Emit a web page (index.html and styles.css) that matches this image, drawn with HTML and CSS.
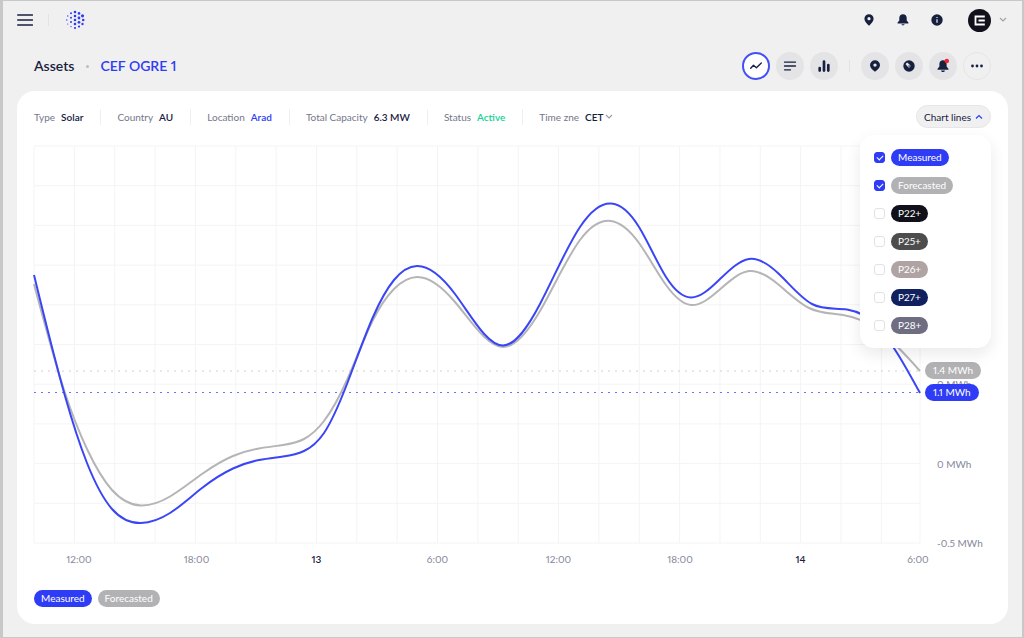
FILE: index.html
```html
<!DOCTYPE html>
<html lang="en">
<head>
<meta charset="utf-8">
<title>CEF OGRE 1</title>
<link rel="stylesheet" href="styles.css">
</head>
<body>
<header class="topbar">
  <button class="icon-btn" aria-label="Menu"><svg width="16" height="14" viewBox="0 0 16 14"><path d="M.8 2h14.6M.8 7h14.6M.8 12h14.6" stroke="#17203f" stroke-width="1.6" stroke-linecap="round"/></svg></button>
  <span class="rule rule-top"></span>
  <a class="logo" href="#" aria-label="Home"><svg width="20" height="20" viewBox="0 0 20 20" fill="#2f3cf5"><circle cx="10" cy="2" r="1.300"/><circle cx="10" cy="6" r="1.300"/><circle cx="10" cy="10" r="1.300"/><circle cx="10" cy="14" r="1.300"/><circle cx="10" cy="18" r="1.100"/><circle cx="6" cy="3.200" r="1"/><circle cx="6" cy="7.700" r="1"/><circle cx="6" cy="12" r="1"/><circle cx="6" cy="16.600" r=".7"/><circle cx="14" cy="3.400" r="1.300"/><circle cx="14" cy="8" r="1.400"/><circle cx="14" cy="12.300" r="1.400"/><circle cx="14" cy="16.600" r="1.100"/><circle cx="17.500" cy="5.800" r="1.600"/><circle cx="18.200" cy="10" r="1.300"/><circle cx="17.500" cy="14" r="1.200"/><circle cx="2.800" cy="6" r=".7"/><circle cx="1.800" cy="10" r=".7"/><circle cx="2.800" cy="14" r=".6"/></svg></a>
  <nav class="top-actions">
    <button class="icon-btn" aria-label="Locations"><svg width="14" height="14" viewBox="0 0 14 14"><path fill="#17203f" fill-rule="evenodd" d="M7 1.200a4.600 4.600 0 0 0-4.600 4.600C2.400 8.600 5 10.800 7 12.800c2-2 4.600-4.200 4.600-7A4.600 4.600 0 0 0 7 1.200zm0 2.900a1.600 1.600 0 1 1 0 3.200 1.600 1.600 0 0 1 0-3.200z"/></svg></button>
    <button class="icon-btn" aria-label="Notifications"><svg width="14" height="14" viewBox="0 0 14 14" fill="#17203f"><path d="M7 1.200c-2.300 0-3.700 1.700-3.700 3.800v2.400L1.600 9.500c-.3.500 0 1 .5 1h9.800c.5 0 .8-.5.5-1l-1.700-2.100V5c0-2.100-1.400-3.800-3.700-3.800zM5.400 11.300h3.200c-.3 1.500-2.900 1.500-3.200 0z"/></svg></button>
    <button class="icon-btn" aria-label="Information"><svg width="14" height="14" viewBox="0 0 14 14"><circle cx="7" cy="7" r="5.700" fill="#17203f"/><path d="M7 6.200v3.600M7 3.900v1.200" stroke="#dfe2ec" stroke-width="1.300"/></svg></button>
  </nav>
  <button class="account" aria-label="Account"><svg width="23" height="23" viewBox="0 0 23 23"><circle cx="11.500" cy="11.500" r="11.500" fill="#11111b"/><path d="M16.800 7.500H7.500v8h9.300M10.500 11.500h6.300" fill="none" stroke="#fff" stroke-width="1.800"/></svg><svg width="8" height="6" viewBox="0 0 8 6"><path d="M1 1l3 3 3-3" fill="none" stroke="#a3a3a7" stroke-width="1.200"/></svg></button>
</header>

<div class="titlebar">
  <h1 class="crumbs"><a class="crumb" href="#">Assets</a><span class="crumb-dot"></span><span class="crumb-current">CEF OGRE 1</span></h1>
  <div class="tools">
    <button class="round round-active" aria-label="Line chart"><svg width="14" height="14" viewBox="0 0 14 14"><path d="M1.700 9.200l2.800-2.900 2.900 2.400 4.900-4.600" fill="none" stroke="#17203f" stroke-width="1.400" stroke-linecap="round" stroke-linejoin="round"/></svg></button>
    <button class="round" aria-label="List"><svg width="14" height="14" viewBox="0 0 14 14"><path d="M1.500 3.200h11M1.500 7h11M1.500 10.800h6" stroke="#17203f" stroke-width="1.300" stroke-linecap="round"/></svg></button>
    <button class="round" aria-label="Bar chart"><svg width="14" height="14" viewBox="0 0 14 14"><path d="M2.700 9v2.600M7 2.500v9.100M11.300 6v5.600" stroke="#17203f" stroke-width="2.700" stroke-linecap="round"/></svg></button>
    <span class="rule rule-tools"></span>
    <button class="round" aria-label="Location"><svg width="14" height="14" viewBox="0 0 14 14"><path fill="#17203f" fill-rule="evenodd" d="M7 1.200a5 5 0 0 0-5 5c0 2.600 2.500 4.500 5 6.600 2.500-2.100 5-4 5-6.600a5 5 0 0 0-5-5zm0 3.200a1.700 1.700 0 1 1 0 3.400 1.700 1.700 0 0 1 0-3.400z"/></svg></button>
    <button class="round" aria-label="Performance"><svg width="14" height="14" viewBox="0 0 14 14"><circle cx="7" cy="7" r="5.700" fill="#17203f"/><path d="M3.600 5.200a3 3 0 0 1 1.600-1.600L8 6a1.200 1.200 0 1 1-2 2z" fill="#e5e5e8"/><circle cx="7.100" cy="7.100" r=".8" fill="#17203f"/></svg></button>
    <button class="round" aria-label="Alerts"><svg width="16" height="16" viewBox="0 0 16 16"><path d="M8 2.200c-2.200 0-3.600 1.700-3.600 3.800v2.600l-1.800 2.200c-.4.500 0 1 .5 1h9.800c.6 0 .8-.5.500-1l-1.800-2.200V6c0-2.100-1.400-3.800-3.600-3.800zM6 12.500h4c-.5 2-3.500 2-4 0z" fill="#17203f"/><circle cx="11.800" cy="3" r="2.300" fill="#f5222d"/></svg></button>
    <button class="round round-ghost" aria-label="More"><svg width="14" height="14" viewBox="0 0 14 14" fill="#17203f"><circle cx="2.500" cy="7" r="1.400"/><circle cx="7" cy="7" r="1.400"/><circle cx="11.500" cy="7" r="1.400"/></svg></button>
  </div>
</div>

<main class="card">
  <div class="meta-row">
    <dl class="meta">
      <div class="meta-item"><dt>Type</dt><dd>Solar</dd></div>
      <div class="meta-item"><dt>Country</dt><dd>AU</dd></div>
      <div class="meta-item"><dt>Location</dt><dd><a class="meta-link" href="#">Arad</a></dd></div>
      <div class="meta-item"><dt>Total Capacity</dt><dd>6.3 MW</dd></div>
      <div class="meta-item"><dt>Status</dt><dd class="meta-ok">Active</dd></div>
      <div class="meta-item"><dt>Time zne</dt><dd><button class="zone">CET<svg width="8" height="6" viewBox="0 0 8 6"><path d="M1 1l3 3 3-3" fill="none" stroke="#9b9ba6" stroke-width="1.100"/></svg></button></dd></div>
    </dl>
    <div class="lines">
      <button class="lines-btn" aria-expanded="true">Chart lines<svg width="8" height="6" viewBox="0 0 8 6"><path d="M1 4.500l3-3 3 3" fill="none" stroke="#2f3cf5" stroke-width="1.200"/></svg></button>
      <div class="lines-menu">
        <label class="option"><input class="tick" type="checkbox" checked><span class="pill measured">Measured</span></label>
        <label class="option"><input class="tick" type="checkbox" checked><span class="pill forecasted">Forecasted</span></label>
        <label class="option"><input class="tick" type="checkbox"><span class="pill p22">P22+</span></label>
        <label class="option"><input class="tick" type="checkbox"><span class="pill p25">P25+</span></label>
        <label class="option"><input class="tick" type="checkbox"><span class="pill p26">P26+</span></label>
        <label class="option"><input class="tick" type="checkbox"><span class="pill p27">P27+</span></label>
        <label class="option"><input class="tick" type="checkbox"><span class="pill p28">P28+</span></label>
      </div>
    </div>
  </div>

  <div class="chart">
    <svg class="plot" viewBox="0 0 886 397" preserveAspectRatio="none" role="img" aria-label="Energy, measured and forecasted">
      <g id="grid" class="grid"></g>
      <path class="level level-forecasted" d="M0 225H886"/>
      <path class="level level-measured" d="M0 246.500H886"/>
      <path id="forecasted" class="line line-forecasted"/>
      <path id="measured" class="line line-measured"/>
    </svg>
    <div class="y-axis">
      <div class="y-labels"><span>0 MWh</span><span>0 MWh</span><span>-0.5 MWh</span></div>
      <span class="pill value value-forecasted forecasted">1.4 MWh</span>
      <span class="pill value value-measured measured">1.1 MWh</span>
    </div>
  </div>
  <div class="x-labels"><span>12:00</span><span>18:00</span><b>13</b><span>6:00</span><span>12:00</span><span>18:00</span><b>14</b><span>6:00</span></div>
  <div class="legend"><span class="pill measured">Measured</span><span class="pill forecasted">Forecasted</span></div>
</main>
<script src="chart.js"></script>
</body>
</html>
```
FILE: styles.css
```css
* { box-sizing: border-box; }
body {
  margin: 0;
  min-height: 100vh;
  background: #f0f0f0;
  border: solid #c8c8c8;
  border-width: 1px 2px 1px 3px;
  font: 10px/16px Lato, "Liberation Sans", sans-serif;
  font-variant-numeric: proportional-nums;
  color: #17203f;
}
button { font: inherit; font-variant-numeric: inherit; color: inherit; padding: 0; border: 0; background: none; cursor: pointer; }
a { color: inherit; text-decoration: none; }
svg { display: block; flex: none; }

.topbar { display: flex; align-items: center; height: 38px; padding: 0 15px 0 14px; }
.icon-btn { display: flex; }
.rule { width: 1px; background: #e3e3e5; }
.rule-top { height: 12px; margin: 0 16px 0 15px; }
.logo { display: flex; }
.top-actions { display: flex; gap: 20px; margin-left: auto; }
.account { display: flex; align-items: center; gap: 8px; margin-left: 24px; }

.titlebar { display: flex; align-items: center; justify-content: space-between; padding: 13px 31px 11px; }
.crumbs { display: flex; align-items: center; margin: 0; font-size: 14px; line-height: 18px; font-weight: 600; }
.crumb-dot { width: 3px; height: 3px; margin: 0 11px 0 12px; border-radius: 50%; background: #bcbcc4; }
.crumb-current { color: #2f3cf5; }
.tools { display: flex; align-items: center; gap: 6px; }
.round { display: flex; align-items: center; justify-content: center; width: 28px; height: 28px; border-radius: 50%; background: #e4e4e7; }
.round-active { background: #fff; border: 2px solid #4450f5; }
.round-ghost { background: none; border: 1px solid #e6e6e8; }
.rule-tools { height: 12px; margin: 0 5px; }

.card { margin: 0 14px; padding: 14px 17px 17px; border-radius: 18px; background: #fff; }
.meta-row { display: flex; align-items: center; justify-content: space-between; }
.meta { display: flex; margin: 0; }
.meta-item { display: flex; gap: 6px; padding-right: 17px; margin-right: 16px; border-right: 1px solid #f0f0f3; }
.meta-item:last-child { border: 0; margin: 0; padding: 0; }
.meta dt { color: #74778a; }
.meta dd { margin: 0; font-weight: 600; }
.meta-link { color: #2f3cf5; }
.meta .meta-ok { color: #13d391; }
.zone { display: flex; align-items: center; gap: 2px; font-weight: 600; }

.lines { position: relative; }
.lines-btn { display: flex; align-items: center; gap: 4px; height: 23px; padding: 0 7px; border: 1px solid #e6e6e8; border-radius: 12px; background: #f0f0f0; }
.lines-menu {
  position: absolute; z-index: 2; top: 30px; right: 0;
  display: flex; flex-direction: column; gap: 11px;
  width: 131px; padding: 14px;
  border-radius: 14px; background: #fff;
  box-shadow: 0 6px 16px rgba(20, 20, 40, .09);
}
.option { display: flex; align-items: center; gap: 6px; }
.tick { appearance: none; display: grid; width: 11px; height: 11px; margin: 0; border: 1px solid #e2e2e6; border-radius: 3px; background: #fff; }
.tick:checked { border-color: #2f3cf5; background: #2f3cf5; }
.tick:checked::before { content: ""; width: 5px; height: 3px; margin: 2px; border: solid #fff; border-width: 0 0 1px 1px; transform: rotate(-45deg); }

.pill { padding: 0 7px; border-radius: 9px; line-height: 17px; color: #fff; white-space: nowrap; }
.measured { background: #2f3cf5; }
.forecasted { background: #b2b2b4; }
.p22 { background: #11111b; }
.p25 { background: #4d4d4d; }
.p26 { background: #b0a3a3; }
.p27 { background: #11205f; }
.p28 { background: #6f6d82; }

.chart { display: flex; margin-top: 18px; height: 397px; }
.plot { flex: 1; min-width: 0; height: 100%; overflow: visible; }
.plot path { fill: none; vector-effect: non-scaling-stroke; }
.grid path { stroke: #f4f4f5; stroke-width: 1; }
.plot .line { stroke-width: 2; }
.line-measured { stroke: #3a46f5; }
.line-forecasted { stroke: #b5b5b7; }
.level { stroke-width: 1; stroke-dasharray: 2 5; }
.level-measured { stroke: #6a74f8; }
.level-forecasted { stroke: #cfcfd2; }

.y-axis { position: relative; display: flex; align-items: flex-end; width: 71px; padding-left: 17px; }
.y-labels { display: flex; flex-direction: column; justify-content: space-between; height: 175px; margin-bottom: -8px; color: #85879a; white-space: nowrap; }
.value { position: absolute; left: 5px; padding: 0 8px; }
.value-forecasted { top: 216px; }
.value-measured { top: 238px; }

.x-labels {
  display: grid; grid-template-columns: 116fr 119fr 121fr 121fr 121fr 122fr 119fr 116fr;
  margin: 8px 15px 0 -13px; text-align: center; color: #85879a;
}
.x-labels b { font-weight: 600; color: #17203f; }
.legend { display: flex; gap: 6px; margin-top: 23px; }
```
FILE: chart.js
```js
const WIDTH = 886;
const HEIGHT = 397;

const series = {
  measured: [[0,129],[31,250],[53,317],[78,363],[107,377],[136,367],[168,342],[199,322.5],[225,314],[249,310.5],[270,305],[290,287],[313,238],[339,171],[360,134],[383,120],[421,148],[469,199.5],[506,158],[546,81],[577,57.5],[605,81],[632,131],[657,151.5],[684,135],[715,113],[745,128],[778,158],[813,163.5],[843,180],[886,247]],
  forecasted: [[0,138],[31,247],[53,303],[78,344],[107,359.5],[136,350.5],[168,328],[199,310],[225,302.5],[249,299],[270,293],[290,275],[313,234],[339,174],[360,143],[383,131],[421,156],[469,201],[506,165],[546,94],[577,75],[605,97],[632,139],[657,159],[684,145],[715,125],[745,139],[775,162],[809,169],[843,183],[886,225]]
};

// Slopes of the natural cubic spline through the points (tridiagonal solve).
function splineSlopes(points) {
  const last = points.length - 1;
  const gap = i => points[i + 1][0] - points[i][0];
  const rise = i => (points[i + 1][1] - points[i][1]) / gap(i);
  const upper = [0.5];
  const value = [1.5 * rise(0)];
  for (let i = 1; i < last; i++) {
    const a = 1 / gap(i - 1);
    const c = 1 / gap(i);
    const pivot = 2 * (a + c) - a * upper[i - 1];
    upper[i] = c / pivot;
    value[i] = (3 * (rise(i - 1) * a + rise(i) * c) - a * value[i - 1]) / pivot;
  }
  const slopes = [];
  slopes[last] = (3 * rise(last - 1) - value[last - 1]) / (2 - upper[last - 1]);
  for (let i = last - 1; i >= 0; i--) slopes[i] = value[i] - upper[i] * slopes[i + 1];
  return slopes;
}

function smoothPath(points) {
  const slopes = splineSlopes(points);
  let d = `M${points[0]}`;
  for (let i = 0; i < points.length - 1; i++) {
    const [x1, y1] = points[i];
    const [x2, y2] = points[i + 1];
    const step = (x2 - x1) / 3;
    d += `C${x1 + step} ${y1 + step * slopes[i]} ${x2 - step} ${y2 - step * slopes[i + 1]} ${x2} ${y2}`;
  }
  return d;
}

function gridPaths() {
  let d = "";
  for (let i = 0; i <= 21; i++) d += `M${i * 40.35} 0V${HEIGHT}`;
  d += `M${WIDTH} 0V${HEIGHT}`;
  for (let i = 0; i <= 10; i++) d += `M0 ${i * HEIGHT / 10}H${WIDTH}`;
  return `<path d="${d}"/>`;
}

document.getElementById("grid").innerHTML = gridPaths();
for (const id in series) document.getElementById(id).setAttribute("d", smoothPath(series[id]));
```
